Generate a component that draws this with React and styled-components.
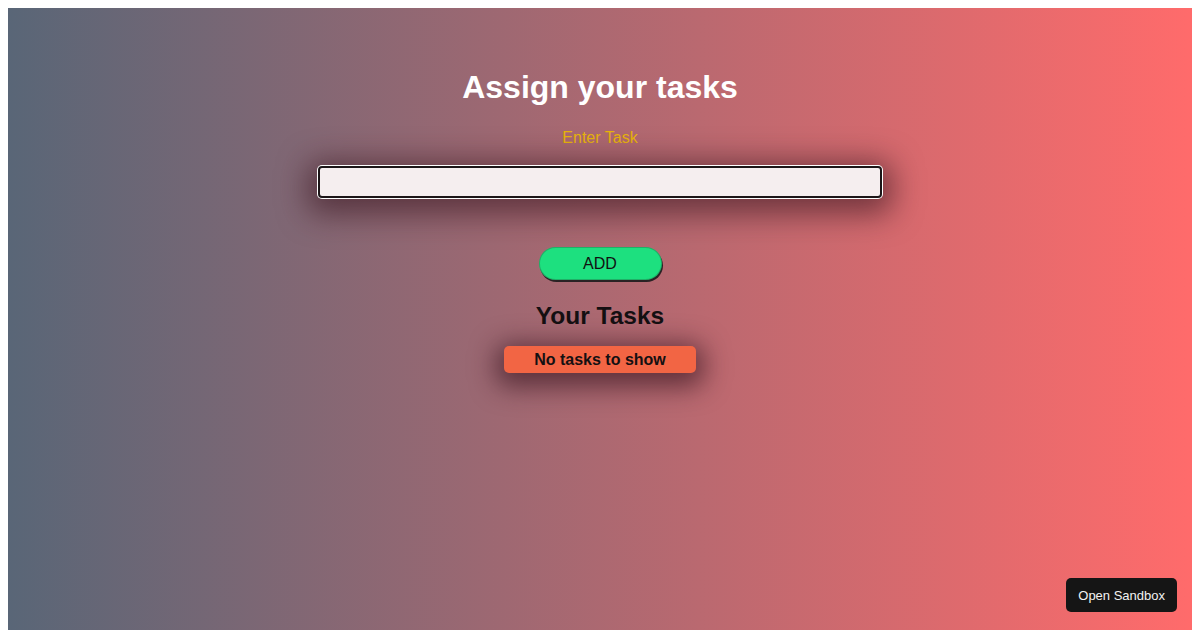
import React, { useState } from "react";
import styled, { createGlobalStyle } from "styled-components";

const GlobalStyle = createGlobalStyle`
  body {
    margin: 8px;
    background: #fff;
    font-family: "Liberation Sans", Arial, sans-serif;
  }
`;

const Page = styled.div`
  min-height: 100vh;
  background: linear-gradient(to right, #596677, #ff6b6b);
  display: flex;
  flex-direction: column;
  align-items: center;
  padding-top: 40px;
  box-sizing: border-box;
`;

const Title = styled.h1`
  margin: 21px 0 0;
  font-size: 32px;
  line-height: 37px;
  font-weight: bold;
  color: #fff;
`;

const Label = styled.label`
  margin-top: 23px;
  font-size: 16px;
  line-height: 18px;
  color: #e8b40c;
`;

const TaskInput = styled.input`
  margin-top: 19px;
  width: 564px;
  height: 32px;
  box-sizing: border-box;
  border: 2px solid #1c1618;
  border-radius: 4px;
  background: #f5eeef;
  padding: 0 6px;
  font-size: 16px;
  font-family: inherit;
  outline: none;
  box-shadow: 0 0 0 1px #fff, 0 6px 30px 10px rgba(55, 20, 30, 0.6);
`;

const AddButton = styled.button`
  margin-top: 49px;
  width: 123px;
  height: 33px;
  border: none;
  border-radius: 17px;
  background: #1de07f;
  box-shadow: 1px 2px 0 #2a2224, inset 0 0 0 1px rgba(40, 30, 30, 0.25);
  font-family: inherit;
  font-size: 16px;
  color: #111;
  cursor: pointer;
`;

const Heading = styled.h2`
  margin: 22px 0 0;
  font-size: 24.5px;
  line-height: 28px;
  font-weight: bold;
  color: #141012;
`;

const EmptyNote = styled.div`
  margin-top: 16px;
  width: 192px;
  height: 27px;
  display: flex;
  align-items: center;
  justify-content: center;
  border-radius: 5px;
  background: #f26544;
  font-size: 16px;
  font-weight: bold;
  color: #141012;
  box-shadow: 0 6px 26px 8px rgba(55, 20, 30, 0.65);
`;

const SandboxButton = styled.a`
  position: fixed;
  right: 23px;
  bottom: 18px;
  height: 34px;
  padding: 0 12px;
  display: flex;
  align-items: center;
  background: #151515;
  border-radius: 5px;
  color: #f2f2f2;
  font-size: 13px;
  text-decoration: none;
`;

export default function App() {
  const [task, setTask] = useState("");
  const [tasks] = useState([]);
  return (
    <>
      <GlobalStyle />
      <Page>
        <Title>Assign your tasks</Title>
        <Label htmlFor="task">Enter Task</Label>
        <TaskInput
          id="task"
          autoFocus
          value={task}
          onChange={(e) => setTask(e.target.value)}
        />
        <AddButton>ADD</AddButton>
        <Heading>Your Tasks</Heading>
        {tasks.length === 0 && <EmptyNote>No tasks to show</EmptyNote>}
      </Page>
      <SandboxButton href="#">Open Sandbox</SandboxButton>
    </>
  );
}
